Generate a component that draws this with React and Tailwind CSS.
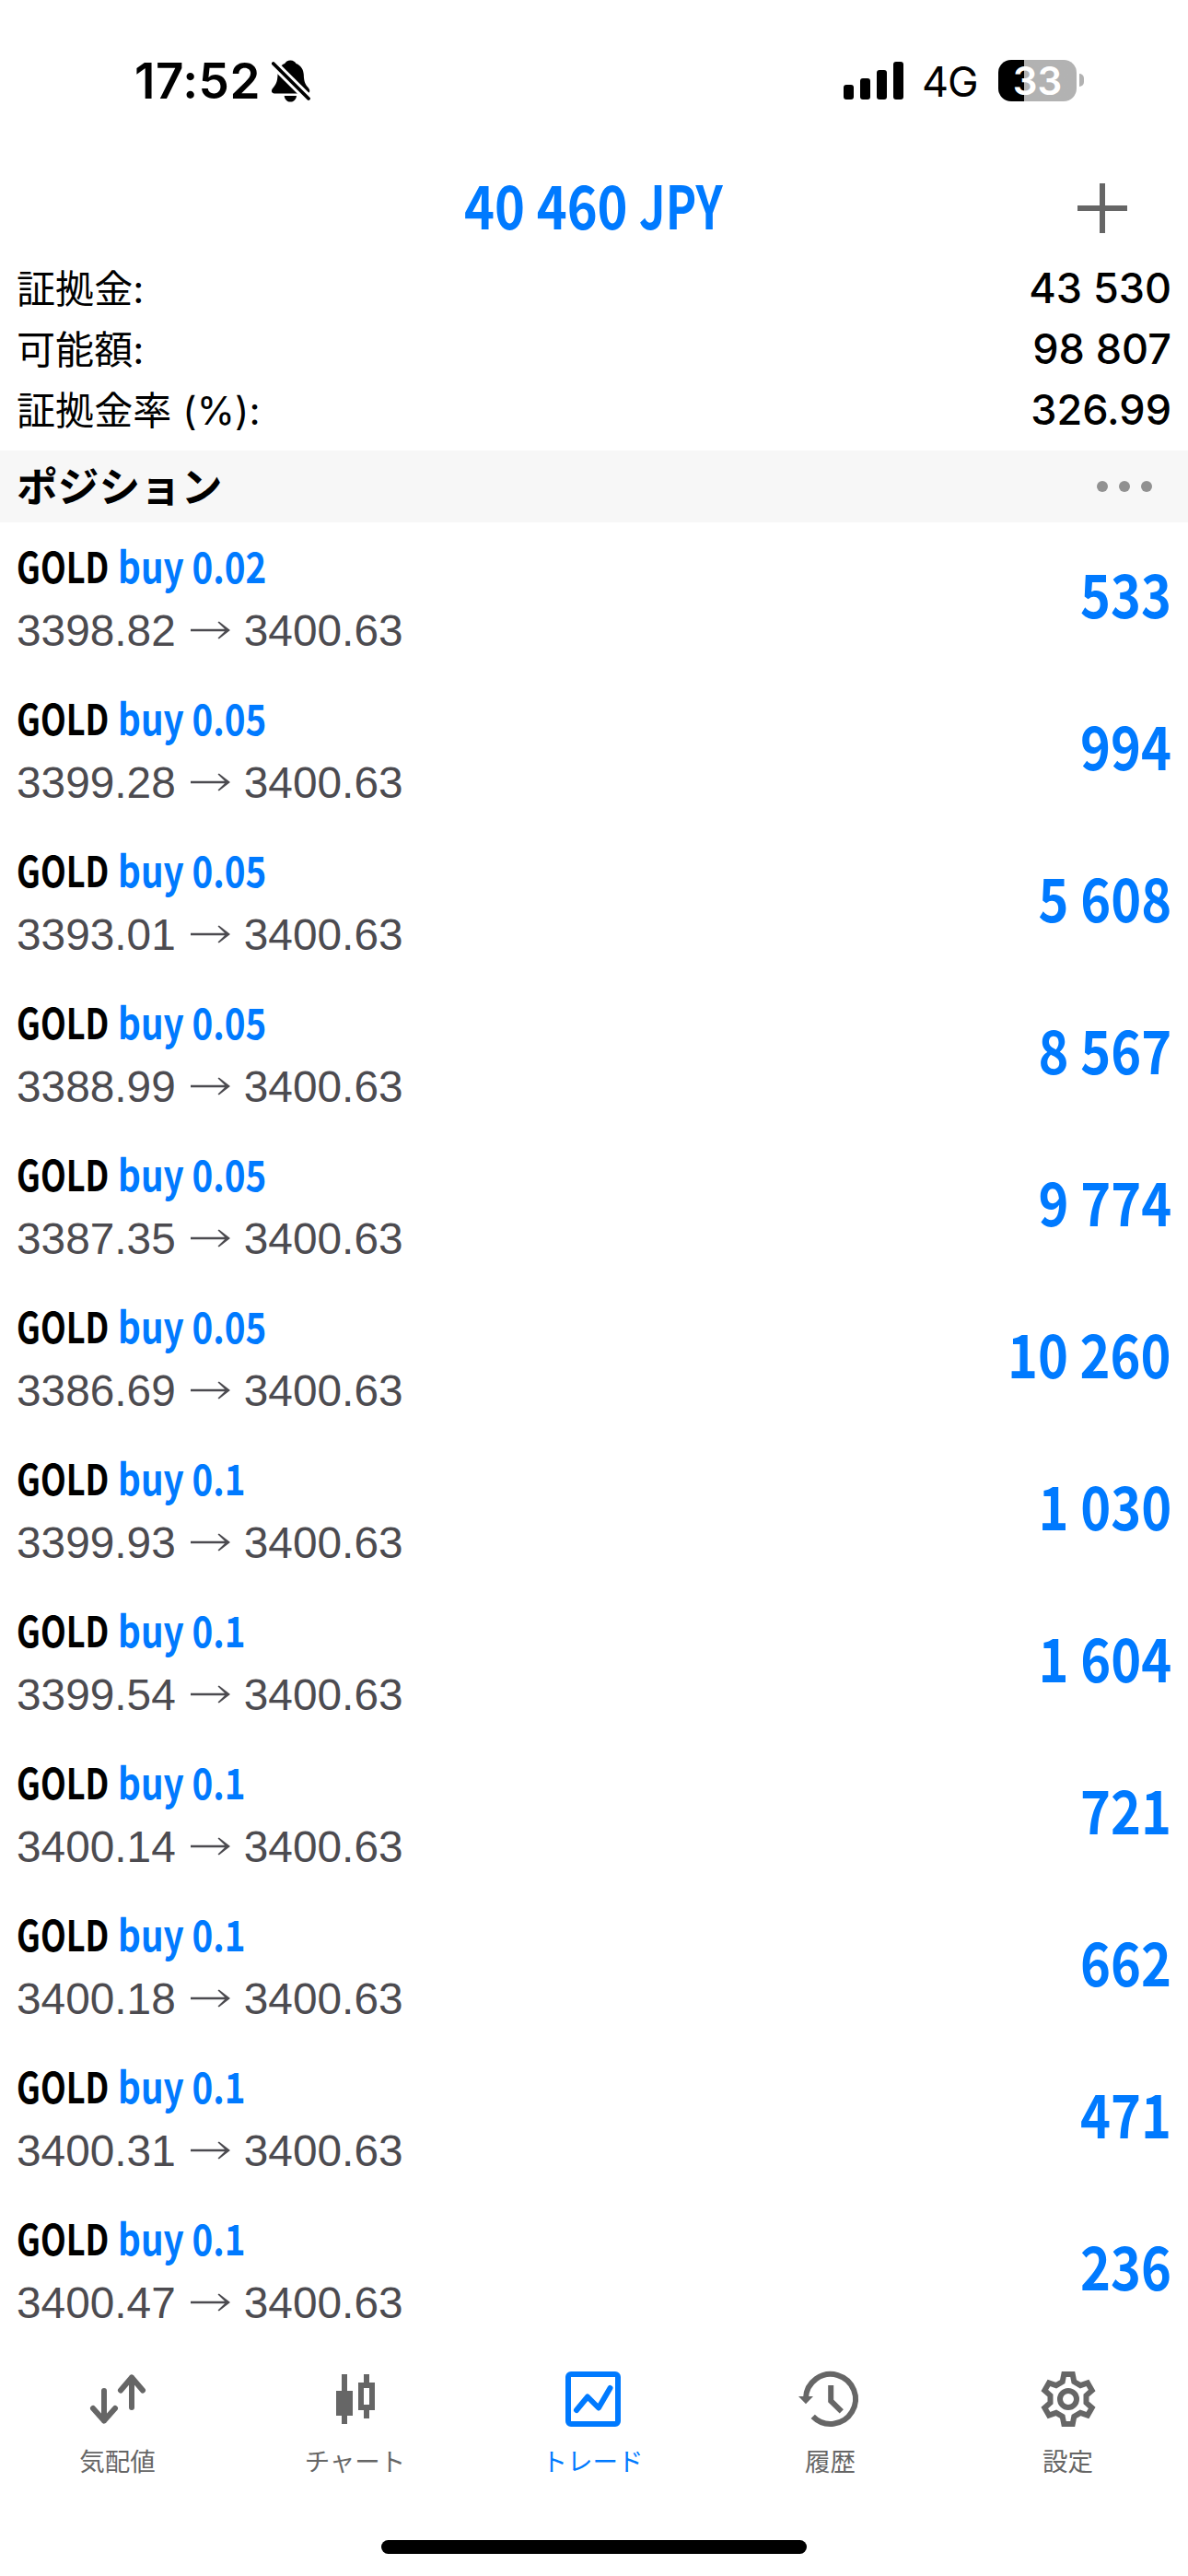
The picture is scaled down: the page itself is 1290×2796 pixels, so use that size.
const positions = [
  { lots: '0.02', open: '3398.82', profit: '533' },
  { lots: '0.05', open: '3399.28', profit: '994' },
  { lots: '0.05', open: '3393.01', profit: '5 608' },
  { lots: '0.05', open: '3388.99', profit: '8 567' },
  { lots: '0.05', open: '3387.35', profit: '9 774' },
  { lots: '0.05', open: '3386.69', profit: '10 260' },
  { lots: '0.1', open: '3399.93', profit: '1 030' },
  { lots: '0.1', open: '3399.54', profit: '1 604' },
  { lots: '0.1', open: '3400.14', profit: '721' },
  { lots: '0.1', open: '3400.18', profit: '662' },
  { lots: '0.1', open: '3400.31', profit: '471' },
  { lots: '0.1', open: '3400.47', profit: '236' },
];

const currentPrice = '3400.63';

const summary = [
  { label: '証拠金:', value: '43 530' },
  { label: '可能額:', value: '98 807' },
  { label: '証拠金率 (%):', value: '326.99' },
];

function QuotesIcon() {
  return (
    <svg viewBox="0 0 72 72" className="size-[72px]" fill="none" stroke="currentColor" strokeWidth="6" strokeLinecap="round" strokeLinejoin="round">
      <path d="M20 27V59.5M8 46L20 59.5L32 46" />
      <path d="M50 45V12.5M38 26.5L50 12.5L62 26.5" />
    </svg>
  );
}

function ChartIcon() {
  return (
    <svg viewBox="0 0 72 72" className="size-[72px]" fill="currentColor">
      <path d="M20 9h6v18h6v27h-6v9h-6v-9h-6V27h6z" />
      <path fillRule="evenodd" d="M44 9h6v9h6v30h-6v9h-6v-9h-6V18h6zM44 24v18h6V24z" />
    </svg>
  );
}

function TradeIcon() {
  return (
    <svg viewBox="1 0 72 72" className="size-[72px]" fill="none" stroke="currentColor" strokeWidth="6">
      <path d="M6 12a6 6 0 0 1 6-6h48a6 6 0 0 1 6 6v48a6 6 0 0 1-6 6H12a6 6 0 0 1-6-6zM12 12v48h48V12z" fill="currentColor" fillRule="evenodd" stroke="none" />
      <path d="M18 48L30 33.5L42 45.5L54.5 24" strokeLinecap="round" strokeLinejoin="round" />
    </svg>
  );
}

function HistoryIcon() {
  return (
    <svg viewBox="0 0 72 72" className="size-[72px]" fill="none" stroke="currentColor" strokeWidth="6">
      <path d="M8 35A27 27 0 1 1 15.7 54.8" />
      <path d="M0 33H16L8 41.3Z" fill="currentColor" stroke="none" />
      <path d="M35.2 21V38L46.8 49.3" />
    </svg>
  );
}

function SettingsIcon() {
  return (
    <svg viewBox="-35 -36 72 72" className="size-[72px]" fill="none" stroke="currentColor" strokeWidth="6">
      <path d="M-4.7-27L4.7-27L6.3-18.9L13.2-14.9L21-17.6L25.7-9.4L19.5-4V4L25.7 9.4L21 17.6L13.2 14.9L6.3 18.9L4.7 27H-4.7L-6.3 18.9L-13.2 14.9L-21 17.6L-25.7 9.4L-19.5 4V-4L-25.7-9.4L-21-17.6L-13.2-14.9L-6.3-18.9Z" />
      <circle r="9" />
    </svg>
  );
}

const tabs = [
  { label: '気配値', icon: QuotesIcon },
  { label: 'チャート', icon: ChartIcon },
  { label: 'トレード', icon: TradeIcon, active: true },
  { label: '履歴', icon: HistoryIcon },
  { label: '設定', icon: SettingsIcon },
];

function BellOffIcon() {
  return (
    <svg viewBox="0 0 42 46" className="h-[46px] w-[42px]">
      <path d="M20.3 .4C23.6 .4 25.8 2.4 26.5 4C31.8 6 34.5 10.5 34.8 16C35 24 36.5 26.5 40 30.5C42.5 34 41 36.4 38 36.4H3C-.3 36.4-1 33.5 1 31C4.5 27 6.3 24 6.5 16C6.8 10 9 6 14.2 4C15.2 1.9 17.3 .4 20.3 .4Z" />
      <path d="M13.7 39H27C26.5 43 24 45.6 20.3 45.6S14.2 43 13.7 39Z" />
      <path d="M-1 1.3L43 45" stroke="white" strokeWidth="9.5" />
      <path d="M1.8 4L40 42" stroke="black" strokeWidth="3.8" strokeLinecap="round" />
    </svg>
  );
}

function PriceArrow() {
  return (
    <svg viewBox="0 0 43 20" className="mr-[15px] mb-[2px] ml-[16px] h-5 w-[43px]" fill="currentColor">
      <path d="M0 8.7H37L29.5 1.5L30.8 .4L43 10L30.8 19.6L29.5 18.5L37 11.3H0Z" />
    </svg>
  );
}

function StatusBar() {
  return (
    <div className="flex h-[174px] items-start justify-between pt-[61px] pr-[113px] pl-[146px] font-[Inter,sans-serif]">
      <div className="flex h-[54px] items-center">
        <span className="w-[149px] text-[53px] leading-[54px] font-semibold tracking-[0.5px]">17:52</span>
        <BellOffIcon />
      </div>
      <div className="flex h-[52px] items-center">
        <div className="flex h-[41px] items-end gap-[7px]">
          <i className="h-4 w-[11px] rounded-[3px] bg-black" />
          <i className="h-[23px] w-[11px] rounded-[3px] bg-black" />
          <i className="h-8 w-[11px] rounded-[3px] bg-black" />
          <i className="h-[41px] w-[11px] rounded-[3px] bg-black" />
        </div>
        <span className="ml-[20px] w-[83px] pt-[3px] text-[45px] leading-[54px] tracking-[-1px]">4G</span>
        <div className="flex h-[45px] w-[85px] items-center justify-center rounded-[14px] bg-linear-to-r from-black from-33% to-[#b2b2b2] to-33% text-[42px] leading-[45px] font-semibold text-white">
          33
        </div>
        <i className="ml-[3px] h-[14px] w-[5px] rounded-r-full bg-[#b2b2b2]" />
      </div>
    </div>
  );
}

function PositionRow({ lots, open, profit }) {
  return (
    <li className="flex h-[165px] justify-between pr-[18px] pl-[18px]">
      <div className="pt-4">
        <div className="flex font-['Noto_Sans_CJK_JP',sans-serif] text-[46px] leading-[60px] font-bold whitespace-nowrap">
          <span className="w-[110px] origin-left scale-x-[0.785]">GOLD</span>
          <span className="origin-left scale-x-[0.84] text-[#007aff]">buy {lots}</span>
        </div>
        <div className="flex items-center pt-[14px] font-['Liberation_Sans',sans-serif] text-[47.8px] leading-[56px] whitespace-nowrap text-[#4c4b50]">
          <span>{open}</span>
          <PriceArrow />
          <span>{currentPrice}</span>
        </div>
      </div>
      <div className="origin-right scale-x-[0.86] pt-9 font-['Noto_Sans_CJK_JP',sans-serif] text-[65px] leading-[80px] font-bold text-[#007aff]">
        {profit}
      </div>
    </li>
  );
}

function App() {
  return (
    <div className="flex h-[2796px] w-[1290px] flex-col overflow-hidden bg-white text-black">
      <StatusBar />

      <header className="grid h-[105px] grid-cols-[1fr_auto_1fr] items-center">
        <span />
        <h1 className="flex origin-center scale-x-[0.86] pb-3 pl-[10px] font-['Noto_Sans_CJK_JP',sans-serif] text-[65px] leading-[80px] font-bold whitespace-pre text-[#007aff]">
          <span>40 460 </span>
          <span className="origin-left scale-x-[0.9]">JPY</span>
        </h1>
        <svg viewBox="0 0 54 54" className="mr-[66px] mb-[2px] size-[54px] justify-self-end" fill="#666">
          <path d="M24 0h6v24h24v6H30v24h-6V30H0v-6h24z" />
        </svg>
      </header>

      <dl className="h-[210px]">
        {summary.map((item) => (
          <div key={item.label} className="flex h-[66px] items-center justify-between pr-[18px] pl-[18px]">
            <dt className="pt-[3px] font-[Inter,'Noto_Sans_CJK_JP',sans-serif] text-[42px] leading-[63px] tracking-[0.1px]">{item.label}</dt>
            <dd className="pt-px font-[Inter,sans-serif] text-[45px] leading-[65px] font-medium">{item.value}</dd>
          </div>
        ))}
      </dl>

      <div className="flex h-[78px] items-center justify-between bg-[#f7f7f7] pr-[39px] pl-[18px]">
        <h2 className="pb-1 font-['Noto_Sans_CJK_JP',sans-serif] text-[44.7px] leading-[74px] font-bold">ポジション</h2>
        <div className="flex gap-3">
          <i className="size-3 rounded-full bg-[#919191]" />
          <i className="size-3 rounded-full bg-[#919191]" />
          <i className="size-3 rounded-full bg-[#919191]" />
        </div>
      </div>

      <ul>
        {positions.map((position) => (
          <PositionRow key={position.open} {...position} />
        ))}
      </ul>

      <nav className="grid h-[210px] grid-cols-5 pt-[21px]">
        {tabs.map(({ label, icon: Icon, active }) => (
          <div
            key={label}
            className={`flex flex-col items-center gap-[10px] ${active ? 'text-[#007aff]' : 'text-[#666]'}`}
          >
            <Icon />
            <span className="pr-[3px] font-['Noto_Sans_CJK_JP',sans-serif] text-[27.5px] leading-[40px]">{label}</span>
          </div>
        ))}
      </nav>
      <div className="mx-auto h-[15px] w-[462px] rounded-full bg-black" />
    </div>
  );
}

export default App;
